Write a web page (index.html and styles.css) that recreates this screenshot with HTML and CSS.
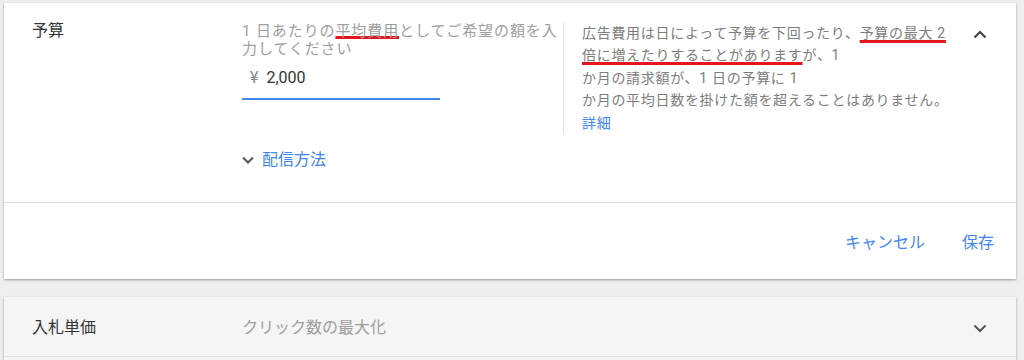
FILE: index.html
```html
<!DOCTYPE html>
<html lang="ja">
<head>
<meta charset="utf-8">
<title>予算</title>
<link rel="stylesheet" href="styles.css">
</head>
<body>
<div class="page">
  <section class="card card-open">
    <div class="card-body">
      <div class="row">
        <div class="label">予算</div>
        <div class="field">
          <p class="field-desc"><span class="line">1 日あたりの<span class="mark">平均費用</span>としてご希望の額を入</span><span class="line">力してください</span></p>
          <div class="input">
            <span class="currency">¥</span><span class="value">2,000</span>
          </div>
        </div>
        <div class="help">
          <p><span class="line">広告費用は日によって予算を下回ったり、<span class="mark">予算の最大 2</span></span><span class="line"><span class="mark">倍に増えたりすることがあります</span>が、1</span><span class="line">か月の請求額が、1 日の予算に 1</span><span class="line">か月の平均日数を掛けた額を超えることはありません。</span><a class="link">詳細</a></p>
        </div>
        <button class="toggle" aria-label="閉じる">
          <svg width="24" height="24" viewBox="0 0 24 24"><polyline points="6.5,14.5 12,9 17.5,14.5" fill="none" stroke="#444" stroke-width="2.2"/></svg>
        </button>
      </div>
      <a class="more">
        <svg width="12" height="8" viewBox="0 0 12 8"><polyline points="1,1.5 6,6.5 11,1.5" fill="none" stroke="#555" stroke-width="2"/></svg>
        <span>配信方法</span>
      </a>
    </div>
    <div class="card-actions">
      <button class="btn">キャンセル</button>
      <button class="btn">保存</button>
    </div>
  </section>

  <section class="card card-collapsed">
    <div class="summary">
      <div class="label">入札単価</div>
      <div class="summary-value">クリック数の最大化</div>
      <svg class="summary-icon" width="24" height="24" viewBox="0 0 24 24"><polyline points="6.5,9.5 12,15 17.5,9.5" fill="none" stroke="#555" stroke-width="2"/></svg>
    </div>
    <div class="summary-next"></div>
  </section>
</div>
</body>
</html>
```

FILE: styles.css
```css
* { box-sizing: border-box; }

html, body {
  margin: 0;
}

body {
  background: #efefef;
  font-family: Roboto, "Noto Sans CJK JP", sans-serif;
  color: #333;
  height: 360px;
  overflow: hidden;
}

.page {
  padding: 3px 8px 0 4px;
}

.card {
  background: #fff;
  box-shadow: 0 1px 2px rgba(0, 0, 0, 0.3), 0 1px 4px rgba(0, 0, 0, 0.08);
}

.card-body {
  padding: 19px 24px 32px 28px;
  border-bottom: 1px solid #e0e0e0;
}

.row {
  display: flex;
  align-items: flex-start;
}

.label {
  width: 210px;
  flex: none;
  font-size: 16px;
  line-height: 18px;
  color: #333;
}

.field {
  width: 321px;
  flex: none;
}

.line {
  display: block;
  white-space: nowrap;
}

.field-desc {
  margin: 0;
  width: 320px;
  font-size: 15px;
  letter-spacing: 0.9px;
  line-height: 18px;
  color: #9e9e9e;
}

.mark {
  text-decoration: underline;
  text-decoration-color: #e3161e;
  text-decoration-thickness: 2.5px;
  text-underline-offset: 0;
  text-decoration-skip-ink: none;
}

.input {
  margin-top: 8px;
  width: 198px;
  padding: 0 0 8px 8px;
  border-bottom: 2px solid #4285f4;
  display: flex;
  align-items: center;
  font-size: 16px;
  line-height: 24px;
}

.currency {
  color: #8a8a8a;
  margin-right: 8px;
}

.value {
  color: #333;
}

.help {
  width: 392px;
  flex: none;
  border-left: 1px solid #e0e0e0;
  padding-left: 18px;
}

.help p {
  margin: 0;
  font-size: 14px;
  letter-spacing: 0.7px;
  line-height: 22.4px;
  color: #7d7d7d;
}

.help .mark {
  text-underline-offset: 1.5px;
}

.link {
  display: block;
  color: #4285f4;
  text-decoration: none;
}

.toggle {
  margin-left: auto;
  margin-top: 1px;
  width: 24px;
  height: 24px;
  padding: 0;
  border: 0;
  background: none;
  display: block;
}

.toggle svg {
  display: block;
}

.more {
  margin: 16px 0 0 210px;
  display: flex;
  align-items: center;
  gap: 8px;
  font-size: 16px;
  line-height: 20px;
  color: #4285f4;
}

.more svg {
  display: block;
}

.card-actions {
  height: 76px;
  display: flex;
  justify-content: flex-end;
  align-items: center;
  gap: 21px;
  padding: 4px 14px 0 0;
}

.btn {
  background: none;
  border: 0;
  padding: 0 8px;
  font-family: inherit;
  font-size: 16px;
  line-height: 20px;
  color: #4285f4;
}

.card-collapsed {
  margin-top: 18px;
  background: #f5f5f5;
}

.summary {
  height: 60px;
  display: flex;
  align-items: center;
  padding: 3px 24px 0 28px;
  border-bottom: 1px solid #e2e2e2;
}

.summary-value {
  font-size: 16px;
  line-height: 18px;
  color: #9e9e9e;
}

.summary-icon {
  margin-left: auto;
  display: block;
}

.summary-next {
  height: 20px;
}
```
